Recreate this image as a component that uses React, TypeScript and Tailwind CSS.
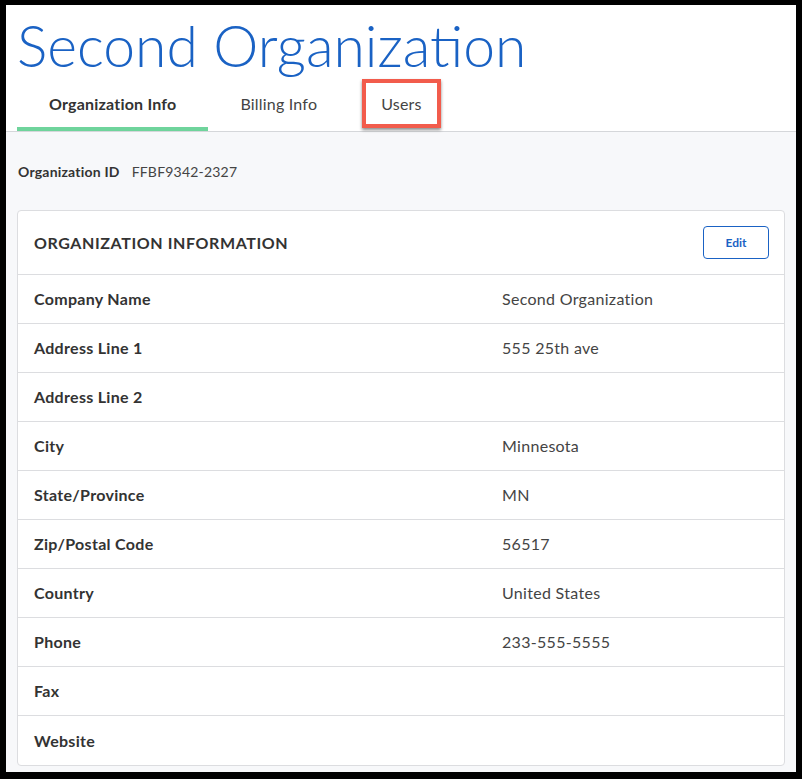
import React from "react";

const rows: [string, string][] = [
  ["Company Name", "Second Organization"],
  ["Address Line 1", "555 25th ave"],
  ["Address Line 2", ""],
  ["City", "Minnesota"],
  ["State/Province", "MN"],
  ["Zip/Postal Code", "56517"],
  ["Country", "United States"],
  ["Phone", "233-555-5555"],
  ["Fax", ""],
  ["Website", ""],
];

export default function App() {
  return (
    <div
      className="h-[779px] w-[802px] bg-black pt-[5px] pl-[6px] pr-[6px] pb-[7px] overflow-hidden"
      style={{ fontFamily: "Lato, 'Noto Sans', sans-serif" }}
    >
      <div className="h-full w-full bg-[#f7f8fa] flex flex-col">
        <div className="bg-white border-b border-[#d5d7da]">
          <h1 className="pl-[11px] pt-[8px] text-[57px] leading-[64px] font-light text-[#1a62c4]">
            Second Organization
          </h1>
          <div className="flex h-[54px] pl-[11px] items-stretch tracking-[0.2px]">
            <div className="relative px-[32px] flex items-center justify-center text-[16px] font-bold text-[#333]">
              Organization Info
              <div className="absolute left-0 right-0 bottom-0 h-[4px] bg-[#6fd49c]" />
            </div>
            <div className="px-[32px] flex items-center justify-center text-[16px] text-[#444]">
              Billing Info
            </div>
            <div className="relative px-[32px] flex items-center justify-center text-[16px] text-[#444]">
              Users
              <div className="absolute left-[13px] w-[79px] top-[2px] h-[49px] border-[4px] border-[#f25c4c] shadow-[0_2px_3px_rgba(0,0,0,0.45)]" />
            </div>
          </div>
        </div>
        <div className="flex items-center h-[78px] pl-[12px] text-[14px] text-[#333] tracking-[0.2px]">
          <span className="font-bold">Organization ID</span>
          <span className="ml-[12px] text-[#444]">FFBF9342-2327</span>
        </div>
        <div className="mx-[11px] bg-white border border-[#dcdde0] rounded-[4px]">
          <div className="flex items-center justify-between h-[64px] pl-[16px] pr-[15px] border-b border-[#dcdde0]">
            <span className="text-[16px] font-bold text-[#333] tracking-[0.6px]">
              ORGANIZATION INFORMATION
            </span>
            <button className="w-[66px] h-[33px] border border-[#1a62c4] rounded-[4px] text-[12px] font-bold text-[#1a62c4] bg-white">
              Edit
            </button>
          </div>
          {rows.map(([label, value], i) => (
            <div
              key={label}
              className={`flex items-center h-[49px] pl-[16px] text-[16px] tracking-[0.3px] ${
                i < rows.length - 1 ? "border-b border-[#dcdde0]" : ""
              }`}
            >
              <span className="w-[468px] font-bold text-[#333]">{label}</span>
              <span className="text-[#444]">{value}</span>
            </div>
          ))}
        </div>
      </div>
    </div>
  );
}
